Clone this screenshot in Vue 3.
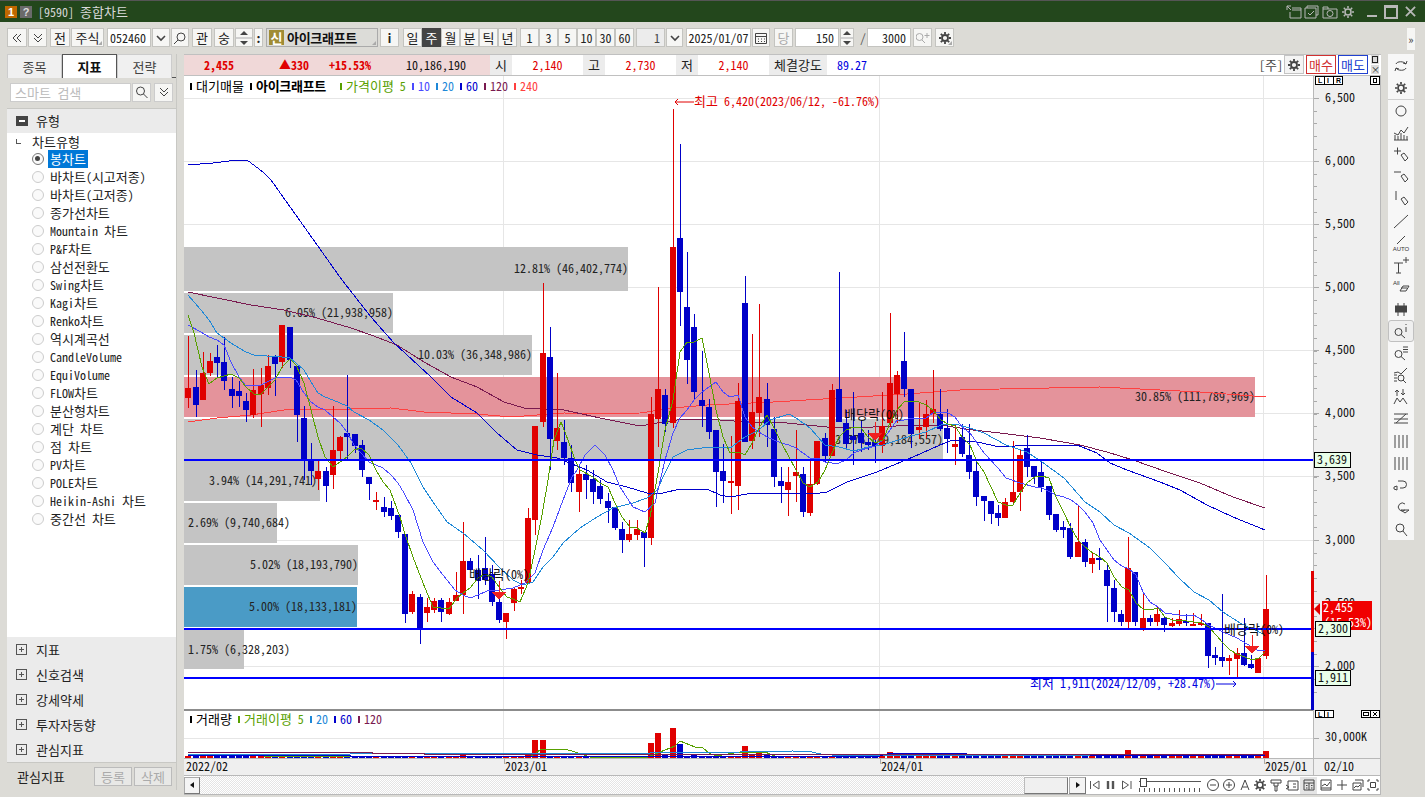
<script setup>
import { h } from 'vue'

const runs = (s) => String(s).split(/([\uAC00-\uD7A3]+)/).filter(Boolean).map(t => ({ t, hg: /[\uAC00-\uD7A3]/.test(t) }))
const Tx = (p) => runs(p.t).map(r => h('span', { class: r.hg ? 'hg' : 'lat' }, r.t))
Tx.props = ['t']
const Ts = (p) => runs(p.t).map(r => h('tspan', { class: r.hg ? 'hg' : 'lat' }, r.t))
Ts.props = ['t']

const toolbar = [
  { w: 20, ml: 0, d: 'M7 3L3 7l4 4M11 3L7 7l4 4' },
  { w: 19, ml: 1, d: 'M3 3l4 4 4-4M3 7l4 4 4-4' },
  { w: 20, ml: 3, t: '전' },
  { w: 33, ml: 1, t: '주식', corner: 1 },
  { w: 44, ml: 3, t: '052460', cls: 'white left' },
  { w: 18, ml: 1, d: 'M3 5l4 4 4-4', stroke: 1.6 },
  { w: 18, ml: 1, d: 'M12 6A4 4 0 1 1 4 6A4 4 0 1 1 12 6M5 9l-4 4' },
  { w: 20, ml: 3, t: '관' },
  { w: 20, ml: 2, t: '숭' },
  { w: 18, ml: 1, spin: 1 },
  { w: 9, ml: 1, t: ':', cls: 'bold' },
  { w: 112, ml: 3, name: 1, corner: 1 },
  { w: 19, ml: 2, t: 'i', cls: 'bold' },
  { w: 19, ml: 4, t: '일' },
  { w: 19, ml: 0, t: '주', cls: 'dark' },
  { w: 19, ml: 0, t: '월' },
  { w: 19, ml: 0, t: '분' },
  { w: 19, ml: 0, t: '틱' },
  { w: 19, ml: 0, t: '년' },
  { w: 19, ml: 3, t: '1' },
  { w: 19, ml: 0, t: '3' },
  { w: 19, ml: 0, t: '5' },
  { w: 19, ml: 0, t: '10' },
  { w: 19, ml: 0, t: '30' },
  { w: 19, ml: 0, t: '60' },
  { w: 29, ml: 2, t: '1', cls: 'gray right' },
  { w: 17, ml: 1, d: 'M3 5l4 4 4-4', stroke: 1.6 },
  { w: 65, ml: 3, t: '2025/01/07', cls: 'white' },
  { w: 18, ml: 1, d: 'M1.5 2.5h11v10h-11zM1.5 5.5h11M4 8h1M7 8h1M10 8h1M4 10.5h1M7 10.5h1M10 10.5h1' },
  { w: 19, ml: 4, t: '당', cls: 'dim' },
  { w: 44, ml: 2, t: '150', cls: 'white right' },
  { w: 14, ml: 1, spin: 1 },
  { w: 6, ml: 6, t: '/', cls: 'plain' },
  { w: 44, ml: 1, t: '3000', cls: 'white right' },
  { w: 19, ml: 2, d: 'M7 6A3.5 3.5 0 1 1 0 6A3.5 3.5 0 1 1 7 6M6 9l3 3M11 2v5M8.5 4.500h5', dim: 1 },
  { w: 19, ml: 3, gear: 1, corner: 1 },
]
const gearPath = 'M7 1v2M7 11v2M1 7h2M11 7h2M2.800 2.800l1.400 1.400M9.800 9.800l1.400 1.400M2.800 11.200l1.400-1.400M9.800 4.200l1.400-1.400M10 7A3 3 0 1 1 4 7A3 3 0 1 1 10 7'
const tree = ['봉차트', '바차트(시고저종)', '바차트(고저종)', '종가선차트', 'Mountain 차트', 'P&F차트', '삼선전환도', 'Swing차트', 'Kagi차트', 'Renko차트', '역시계곡선', 'CandleVolume', 'EquiVolume', 'FLOW차트', '분산형차트', '계단 차트', '점 차트', 'PV차트', 'POLE차트', 'Heikin-Ashi 차트', '중간선 차트']
const accordion = ['지표', '신호검색', '강세약세', '투자자동향', '관심지표']
const legend = [
  { t: '대기매물', c: '#000', w: 60 },
  { t: '아이크래프트', c: '#000', w: 90, b: 1 },
  { t: '가격이평 5', c: '#58a000', w: 72 },
  { t: '10', c: '#4a4aff', w: 24 },
  { t: '20', c: '#1e88d8', w: 24 },
  { t: '60', c: '#0000cc', w: 24 },
  { t: '120', c: '#7a1a50', w: 30 },
  { t: '240', c: '#ff4040', w: 30 },
]
const volLegend = [
  { t: '거래량', c: '#000', w: 48 },
  { t: '거래이평 5', c: '#58a000', w: 72 },
  { t: '20', c: '#1e88d8', w: 24 },
  { t: '60', c: '#0000cc', w: 24 },
  { t: '120', c: '#7a1a50', w: 30 },
]

const raw = `r388 398 336 408,b387 405 370 417,r373 400 352 400,r361 373 353 376,b357 363 345 377,b362 381 337 390,b389 396 377 408,b391 396 381 407,b401 410 393 422,r390 415 369 418,r385 394 368 427,r366 388 355 395,b357 364 355 396,r325 362 325 368,b327 360 327 368,b366 415 366 442,b418 461 406 480,b460 471 443 485,r471 479 460 490,b471 486 467 502,r450 475 406 489,r437 451 436 460,b433 437 375 460,b434 446 434 453,b445 470 440 477,b477 484 477 500,r500 501 492 510,b507 512 497 517,b508 516 501 520,b515 532 515 538,b534 614 534 623,r594 612 591 614,b597 629 594 644,r607 613 598 622,r601 610 598 613,b600 612 598 622,r602 614 598 615,r595 601 572 601,r561 595 522 614,b561 570 558 570,b570 581 555 599,b568 580 537 585,b574 602 565 606,b602 620 581 623,r613 622 613 639,r589 603 587 611,r587 588 580 594,r518 583 508 584,r426 520 426 535,r353 422 283 427,b357 439 327 470,r428 441 373 450,b442 458 420 465,b458 483 445 492,r474 492 470 512,b474 480 465 499,b479 492 470 504,b486 499 480 504,b501 508 493 523,b507 528 507 530,b529 540 522 553,r534 540 520 542,r529 535 520 540,b532 538 532 567,r414 538 397 545,r389 419 287 447,b395 424 389 432,r247 423 109 428,b238 292 144 326,b307 360 252 384,b327 392 314 400,b400 406 351 427,b407 432 399 439,b430 472 430 507,b471 481 444 503,r481 482 436 514,r401 486 383 510,b303 442 276 442,r412 441 334 449,r397 413 304 437,b399 425 383 447,b429 477 417 487,b481 486 467 503,r482 490 467 516,r472 476 430 502,b474 512 467 517,r484 513 460 516,r441 484 441 485,b438 456 433 462,r390 456 384 456,b389 422 272 422,b423 444 410 450,b436 440 392 465,b433 443 420 452,b442 445 430 450,b442 446 422 463,r426 446 392 453,r383 423 313 427,r375 394 371 423,b361 389 332 397,b389 434 389 448,r427 430 402 439,r414 427 400 438,r409 414 370 423,b414 429 389 431,b428 439 409 453,r444 447 425 465,b437 454 424 457,b455 472 424 479,b471 497 459 506,b496 501 496 521,b501 514 501 524,b513 518 505 526,r502 518 498 518,r492 502 441 505,r455 492 450 511,b448 467 435 477,b466 477 466 484,b472 487 460 492,b486 515 486 520,b514 530 514 532,b527 530 521 538,b528 557 523 559,r542 557 506 557,b542 562 539 567,r558 564 553 573,b558 560 548 570,b570 586 563 622,b588 612 580 622,b614 622 610 626,r568 622 537 628,b572 622 572 626,r618 628 594 631,b618 622 615 626,r614 622 607 626,b618 625 616 632,r623 626 618 627,r619 624 610 626,b621 623 614 626,r624 626 613 626,r623 625 614 626,b623 656 623 668,b655 658 647 665,b657 661 594 667,r658 661 655 675,r653 659 648 678,b653 665 618 666,b664 668 655 669,r658 673 658 673,r609 656 575 659`
const candles = raw.split(',').map((s, i) => {
  const [top, bot, hi, lo] = s.slice(1).split(' ').map(Number)
  return { i, x: Math.round(188.3 + i * 7.23), color: s[0] === 'r' ? '#e00000' : '#0000c8', top, h: Math.max(bot - top, 2), hi, wh: lo - hi }
})
const volOver = { 48: 18, 49: 18, 64: 15, 65: 25, 67: 30, 68: 14, 77: 12, 79: 7, 38: 4, 47: 3, 97: 6, 130: 8, 149: 7, 66: 3, 70: 3, 80: 3, 78: 4 }
const volumes = candles.map(c => ({ x: c.x - 3, h: volOver[c.i] || 2, color: volOver[c.i] && c.i === 77 ? '#e00000' : c.color }))

const ma = [
  { c: '#ff4040', p: '188,422 217,418 251,415 284,410 311,409 351,409 391,408 424,412 477,414 511,417 564,413 600,414 640,413 673,408 707,405 773,402 840,398 907,394 960,390 1000,389 1100,387 1200,392 1266,397' },
  { c: '#7a1a50', p: '188,292 217,298 251,305 284,310 317,318 351,328 371,335 397,345 424,362 451,377 477,387 504,402 524,408 564,410 600,418 640,426 657,423 677,420 707,419 747,422 787,423 827,427 873,427 920,425 940,425 973,430 1000,433 1040,438 1080,445 1107,452 1133,460 1167,472 1200,483 1233,497 1265,508' },
  { c: '#0000cc', p: '188,165 213,163 237,160 247,160 263,172 271,180 342,280 371,317 394,343 431,377 451,397 477,413 497,433 517,450 537,455 557,458 587,470 607,482 627,487 647,493 663,493 680,489 707,489 720,495 730,497 753,493 780,493 813,494 827,492 847,482 877,472 913,457 940,445 953,440 977,442 1000,447 1030,445 1077,445 1097,453 1110,463 1127,470 1160,482 1180,490 1207,505 1233,517 1265,530' },
  { c: '#1e88d8', p: '188,295 201,310 209,320 217,333 224,338 231,343 239,348 246,352 254,355 267,356 282,357 290,358 296,363 304,370 311,382 318,393 325,397 333,400 347,406 354,412 369,420 383,430 398,445 411,463 423,487 433,502 447,522 463,533 483,550 499,567 513,580 523,585 533,582 543,567 553,557 563,543 580,528 597,517 613,508 633,503 647,498 657,490 665,473 673,457 687,450 702,448 723,447 730,448 745,437 759,430 770,420 789,414 796,418 810,428 825,445 839,447 854,451 868,447 883,445 904,438 926,432 941,425 955,424 970,428 984,433 1006,445 1027,452 1042,462 1064,478 1085,502 1100,512 1114,525 1129,533 1150,548 1165,563 1179,578 1194,592 1209,600 1223,612 1240,623 1263,634' },
  { c: '#4a4aff', p: '188,325 201,332 209,337 217,340 224,345 231,362 239,377 246,386 254,385 261,385 267,382 275,378 282,377 290,377 296,380 304,393 311,402 318,407 325,410 333,417 340,423 347,432 354,445 361,453 369,462 376,465 383,468 391,475 398,483 404,493 413,510 423,542 433,562 443,575 455,590 463,595 470,598 478,595 487,591 499,590 513,588 525,583 535,573 543,550 553,527 563,500 572,477 577,470 585,455 595,445 605,455 613,470 620,487 633,507 645,512 655,503 665,460 673,433 680,418 687,410 694,400 702,392 716,382 723,392 730,397 738,395 745,417 752,427 759,432 767,437 774,440 781,443 789,445 796,448 803,453 810,458 818,458 825,462 832,463 839,463 846,460 854,453 861,450 868,448 875,446 883,440 890,430 897,420 904,420 912,418 919,418 926,418 933,413 940,412 948,413 955,417 962,427 970,433 977,443 984,453 998,468 1006,478 1020,483 1035,487 1042,488 1056,495 1064,497 1071,500 1078,505 1085,512 1093,523 1100,540 1107,550 1114,560 1122,566 1129,569 1136,575 1143,592 1150,602 1158,607 1165,613 1179,615 1194,615 1202,620 1209,625 1223,632 1237,638 1252,647 1259,651 1265,650' },
  { c: '#58a000', p: '188,315 194,333 202,367 209,384 217,378 224,376 231,374 239,378 246,387 254,394 260,395 267,388 275,380 282,367 290,359 296,365 304,383 311,410 318,437 325,457 333,467 340,462 347,457 354,450 361,448 369,455 376,470 383,482 390,490 400,517 405,534 413,557 423,583 433,607 441,608 449,609 457,598 463,593 470,588 478,578 485,574 492,577 499,587 507,597 513,599 520,602 528,583 535,550 542,515 548,480 554,440 561,422 568,440 575,460 580,470 593,477 600,483 608,487 615,503 622,517 630,527 637,528 645,533 650,517 658,473 665,430 673,400 680,352 687,342 694,342 702,338 709,373 716,410 723,437 730,453 738,452 745,455 752,443 759,428 767,415 774,428 781,442 789,457 796,470 803,483 810,487 818,482 825,470 832,453 839,437 846,430 854,427 861,428 868,437 875,443 883,440 890,423 897,410 904,402 912,401 919,402 926,405 933,410 941,420 948,424 955,426 962,437 970,445 977,462 984,472 991,487 998,502 1006,505 1013,505 1020,493 1027,483 1035,477 1042,476 1049,478 1056,497 1064,513 1071,528 1078,540 1085,547 1093,553 1100,557 1107,563 1114,577 1122,587 1129,590 1136,603 1143,609 1150,610 1158,608 1165,617 1172,620 1179,620 1187,621 1194,622 1202,623 1209,627 1216,635 1223,643 1230,650 1237,654 1245,657 1252,660 1259,658 1265,652' },
]
const volMa = [
  { c: '#58a000', p: '188,755 260,756 530,757 540,750 553,749 565,749 575,752 590,757 648,757 660,752 675,746 680,741 695,747 702,747 709,753 716,756 740,752 765,752 775,756' },
  { c: '#1e88d8', p: '188,754 350,754 650,753 740,752 793,751 812,752 825,755 1265,756' },
  { c: '#0000cc', p: '188,755 350,755 350,756 880,756 890,753 966,753 966,754 1090,754 1090,755 1265,755' },
  { c: '#7a1a50', p: '188,752 372,752 372,753 424,753 424,754 1265,754' },
]
const bars = [
  { y: 247, h: 44, w: 444, t: '12.81% (46,402,774)' },
  { y: 293, h: 40, w: 209, t: '6.05% (21,938,958)' },
  { y: 335, h: 40, w: 348, t: '10.03% (36,348,986)' },
  { y: 419, h: 41, w: 759, t: '13.57% (49,184,557)' },
  { y: 377, h: 40, w: 1071, t: '30.85% (111,789,969)', c: '#e4939b' },
  { y: 461, h: 40, w: 136, t: '3.94% (14,291,741)', dx: -3 },
  { y: 503, h: 40, w: 93, t: '2.69% (9,740,684)', left: 1 },
  { y: 545, h: 40, w: 174, t: '5.02% (18,193,790)' },
  { y: 587, h: 40, w: 173, t: '5.00% (18,133,181)', c: '#4a9bc6' },
  { y: 630, h: 39, w: 60, t: '1.75% (6,328,203)', left: 1 },
]
const prices = [['6,500', 98], ['6,000', 161], ['5,500', 224], ['5,000', 287], ['4,500', 350], ['4,000', 413], ['3,500', 476], ['3,000', 540], ['2,500', 603], ['2,000', 666]]
const minor = Array.from({ length: 48 }, (_, i) => 98 + i * 12.63)
const hGuides = [[460, '3,639', 1314, 36], [629, '2,300', 1315, 35], [678, '1,911', 1315, 35]]
const dates = [['2022/02', 186], ['2023/01', 505], ['2024/01', 881], ['2025/01', 1265]]

const tools = [
  { d: 'M5 8c1-3 8-3 10 0M15 8l1-3M15 8l-3-1M15 12c-1 3-8 3-10 0M5 12l-1 3M5 12l3 1', tall: 1 },
  { d: 'M10 4v2M10 14v2M4 10h2M14 10h2M5.800 5.800l1.400 1.400M12.800 12.800l1.400 1.400M5.800 14.200l1.400-1.400M12.800 7.200l1.400-1.400M13 10A3 3 0 1 1 7 10A3 3 0 1 1 13 10', sw: 1.7, sep: 1 },
  { d: 'M15 10A5 5 0 1 1 5 10A5 5 0 1 1 15 10' },
  { d: 'M3 17h14M4 17v-5M7 17v-4M10 17v-7M13 17v-5M16 17v-4M3 10l4 2 3-5 3 3 4-6' },
  { d: 'M3 6h7M6.500 2.500v7M10 10l3-2 4 5-3 3z' },
  { d: 'M3 5h7M10 9l3-2 4 5-3 3z' },
  { d: 'M5 2v9M10 10l3-2 4 5-3 3z' },
  { d: 'M3 17L17 4' },
  { d: 'M6 11L14 3', label: 'AUTO' },
  { d: 'M3 8h9M7.500 8v10M5 18h5M15 2v6M12 5h6' },
  { d: 'M9 14h6l3-5h-6zM10 11h6', label2: 'All' },
  { d: 'M7 4v13M13 4v13', fillRects: 1 },
  { d: 'M11 11A3.500 3.500 0 1 1 4 11A3.500 3.500 0 1 1 11 11M10 13.500l4 3.500M15 3v1M15 6v5', on: 1 },
  { d: 'M11 11A3.500 3.500 0 1 1 4 11A3.500 3.500 0 1 1 11 11M10 13.500l4 3.500M12 4h5M12 6.500h5M12 9h5' },
  { d: 'M13 13A3 3 0 1 1 7 13A3 3 0 1 1 13 13M12 15l3 3M3 10h3M3 13h3M3 16h3M3 8l4-1 3 2 6-6' },
  { d: 'M3 17l3-6 3 4 3-4 4 6M6 3v6M4 5l2-2 2 2M12 8V2M10 6l2 2 2-2' },
  { d: 'M3 5h14M15 5L5 14M3 10h14M3 14h14' },
  { d: 'M4 4v13M8 4v13M12 4v13M16 4v13' },
  { d: 'M4 4v13M8 4v13M12 4v13M16 4v13' },
  { d: 'M7 6h5a3.500 3.500 0 0 1 0 7H9M3 12l3-1 0 4-3-1z' },
  { d: 'M14 13A4 4 0 1 1 14 7M10 13h8l-4 3z' },
  { d: 'M13 9A4 4 0 1 1 5 9A4 4 0 1 1 13 9M12 12l4 5' },
]
const bottomIcons = [
  { w: 16, d: 'M2.500 3v8M11 3L5 7l6 4z', ml: 1 },
  { w: 16, d: 'M4 3v8M9 3v8', sw: 2.400 },
  { w: 15, d: 'M11.500 3v8M3 3l6 4-6 4z' },
]
const bottomIcons2 = [
  { w: 17, d: 'M12.500 7A5.500 5.500 0 1 1 1.500 7A5.500 5.500 0 1 1 12.500 7M4 7h6' },
  { w: 16, d: 'M12.500 7A5.500 5.500 0 1 1 1.500 7A5.500 5.500 0 1 1 12.500 7M4 7h6M7 4v6' },
  { w: 15, d: 'M3 12L7 2l4 10M4.500 9h5' },
  { w: 16, d: gearPath, sw: 1.700 },
  { w: 16, d: 'M2 2h10v3H2zM5 5v3h4V5M6 8v5h2V8' },
  { w: 16, d: 'M3 3h10v9H3zM1 7l3 2-3 2M8 6h3M8 9h3' },
  { w: 17, d: 'M2 2h10v10H2zM2 5h10M7 5v7M4 7.500h1.500M9 7.500h1.500M4 10h1.500M9 10h1.500', on: 1 },
  { w: 17, d: 'M2 2h10v10H2zM3 8l3-2 2 2 3-4M2 10h10' },
  { w: 16, d: 'M7 2v10M2 7h10' },
  { w: 15, d: 'M4 2h8v7M2 5h8v7H2zM3 10l2-2 2 1 2-2' },
  { w: 16, d: 'M2 4V2h2M10 2h2v2M12 10v2h-2M4 12H2v-2M4.500 4.500h5v5h-5z' },
]
</script>

<template>
  <div class="window">
    <header class="titlebar">
      <span class="badge orange">1</span>
      <span class="badge grey">?</span>
      <span class="title"><Tx t="[9590] 종합차트" /></span>
      <div class="winicons">
        <svg class="wi" viewBox="0 0 16 14"><path d="M1 1h4M1 1v4M1 1l4 4M6 3h9v10H4V7M6 5h9" /></svg>
        <svg class="wi" viewBox="0 0 16 14"><path d="M3 3V1h11v9h-2M1 3h11v10H1zM4 8l2 2 4-4" /></svg>
        <svg class="wi" viewBox="0 0 16 14"><path d="M1 4h14v9H1zM1 4V2h5v2M11 8.500a3 3 0 1 1-6 0a3 3 0 1 1 6 0" /></svg>
        <svg class="wi" viewBox="0 0 14 14"><path :d="gearPath" stroke-width="1.500" /></svg>
        <span class="win-min"></span>
        <span class="win-max"></span>
        <svg class="win-x" viewBox="0 0 12 12"><path d="M1 1l10 10M11 1L1 11" /></svg>
      </div>
    </header>

    <div class="toolbar">
      <div
        v-for="(b, i) in toolbar"
        :key="i"
        class="tb"
        :class="[b.cls, { corner: b.corner, namebtn: b.name }]"
        :style="{ width: b.w + 'px', marginLeft: b.ml + 'px' }"
      >
        <Tx v-if="b.t" :t="b.t" />
        <svg v-if="b.d" class="ic14" :class="{ dimicon: b.dim }" viewBox="0 0 14 14"><path :d="b.d" :stroke-width="b.stroke || 1" /></svg>
        <svg v-if="b.gear" class="ic14" viewBox="0 0 14 14"><path :d="gearPath" stroke-width="1.800" /></svg>
        <div v-if="b.spin" class="spin"><i class="up"></i><b></b><i class="down"></i></div>
        <template v-if="b.name"><span class="new">신</span><span class="stockname">아이크래프트</span></template>
      </div>
      <div class="more">»</div>
    </div>

    <div class="main">
      <aside class="side">
        <div class="tabs">
          <div class="tab">종목</div>
          <div class="tab active">지표</div>
          <div class="tab">전략</div>
        </div>
        <div class="searchrow">
          <div class="searchbox">스마트 검색</div>
          <div class="sbtn first"><svg class="ic14" viewBox="0 0 14 14"><path d="M9.500 6A4 4 0 1 1 1.500 6A4 4 0 1 1 9.500 6M8.500 9l4 4" /></svg></div>
          <div class="sbtn"><svg class="ic14" viewBox="0 0 14 14"><path d="M3 3l4 4 4-4M3 7l4 4 4-4" /></svg></div>
        </div>
        <div class="sect"><span class="folder"><i></i></span>유형</div>
        <div class="tree">
          <div class="treehead"><span class="elbow"></span>차트유형</div>
          <div v-for="(t, i) in tree" :key="t" class="treerow">
            <span class="radio" :class="{ on: i === 0 }"></span>
            <span class="tlabel" :class="{ sel: i === 0 }"><Tx :t="t" /></span>
          </div>
        </div>
        <div class="accordion">
          <div v-for="a in accordion" :key="a" class="acc">
            <span class="plus"></span>{{ a }}
          </div>
        </div>
        <div class="sidefoot">
          <span class="footlabel">관심지표</span>
          <span class="footbtn">등록</span>
          <span class="footbtn">삭제</span>
        </div>
      </aside>

      <section class="chart">
        <div class="quote">
          <div class="q-pink">
            <span class="q-price">2,455</span>
            <span class="q-up">▲330</span>
            <span class="q-rate">+15.53%</span>
            <span class="q-vol">10,186,190</span>
          </div>
          <span class="q-label w22">시</span><span class="q-val w71">2,140</span>
          <span class="q-label w22">고</span><span class="q-val w71">2,730</span>
          <span class="q-label w22">저</span><span class="q-val w71">2,140</span>
          <span class="q-label w58">체결강도</span><span class="q-blue">89.27</span>
          <span class="q-unit"><Tx t="[주]" /></span>
          <span class="q-gear"><svg class="ic14" viewBox="0 0 14 14"><path :d="gearPath" stroke-width="1.800" /></svg></span>
          <span class="q-buy">매수</span>
          <span class="q-sell">매도</span>
          <div class="q-mini">
            <span><i class="sq"></i></span>
            <span class="x">×</span>
          </div>
        </div>

        <div class="canvas">
          <svg class="plot" width="1197" height="700" viewBox="184 76 1197 700">
            <rect x="184" y="76" width="1129" height="683" fill="#fff" />
            <g shape-rendering="crispEdges">
              <rect v-for="p in prices" :key="p[0]" x="184" :y="p[1]" width="1129" height="1" fill="#e6e6e6" />
              <rect x="184" y="738" width="1129" height="1" fill="#e6e6e6" />
              <rect x="503" y="76" width="1" height="682" fill="#e6e6e6" />
              <rect x="879" y="76" width="1" height="682" fill="#e6e6e6" />
              <rect x="1263" y="76" width="1" height="682" fill="#e6e6e6" />
              <rect v-for="b in bars" :key="b.t" x="184" :y="b.y" :width="b.w" :height="b.h" :fill="b.c || '#c4c4c4'" />
            </g>
            <text
              v-for="b in bars"
              :key="b.t + 't'"
              class="t12"
              :x="b.left ? 188 : 184 + b.w + (b.dx || 0)"
              :y="b.y + b.h / 2 + 4"
              :text-anchor="b.left ? 'start' : 'end'"
              fill="#222"
            >{{ b.t }}</text>

            <g shape-rendering="crispEdges">
              <polyline v-for="m in ma.slice(0, 2)" :key="m.c" :points="m.p" fill="none" :stroke="m.c" stroke-width="1" />
              <g v-for="c in candles" :key="c.i">
                <rect :x="c.x" :y="c.hi" width="1" :height="c.wh" :fill="c.color" />
                <rect :x="c.x - 3" :y="c.top" width="6" :height="c.h" :fill="c.color" />
              </g>
              <polyline v-for="m in ma.slice(2)" :key="m.c" :points="m.p" fill="none" :stroke="m.c" stroke-width="1" />
              <rect v-for="g in hGuides" :key="g[0]" x="184" :y="g[0] - 1" width="1129" height="2" fill="#0000ff" />
            </g>

            <g fill="#f02020" shape-rendering="crispEdges">
              <rect x="499" y="581" width="1" height="12" /><polygon points="492,592 506,592 499,600" />
              <rect x="875" y="422" width="1" height="12" /><polygon points="868,433 882,433 875,441" />
              <rect x="1252" y="635" width="1" height="12" /><polygon points="1245,646 1259,646 1252,654" />
            </g>
            <text class="t12" x="844" y="419" fill="#111"><Ts t="배당락(0%)" /></text>
            <text class="t12" x="469" y="579" fill="#111"><Ts t="배당락(0%)" /></text>
            <text class="t12" x="1224" y="634" fill="#111"><Ts t="배당락(0%)" /></text>
            <path d="M694 102H675M678 99l-3 3 3 3" fill="none" stroke="#e00000" />
            <text class="t12" x="694" y="106" fill="#e00000"><Ts t="최고 6,420(2023/06/12, -61.76%)" /></text>
            <text class="t12" x="1030" y="688" fill="#0000e0"><Ts t="최저 1,911(2024/12/09, +28.47%)" /></text>
            <path d="M1216 684H1236M1233 681l3 3-3 3" fill="none" stroke="#0000e0" />

            <rect x="184" y="709" width="1129" height="2" fill="#8c8c8c" />
            <g shape-rendering="crispEdges">
              <rect v-for="(v, i) in volumes" :key="i" :x="v.x" :y="758 - v.h" width="6" :height="v.h" :fill="v.color" />
              <polyline v-for="m in volMa" :key="m.c" :points="m.p" fill="none" :stroke="m.c" stroke-width="1" />
            </g>

            <rect x="1313" y="76" width="67" height="683" fill="#efefef" />
            <rect x="1313" y="76" width="1" height="683" fill="#b8b8b8" />
            <rect x="1380" y="76" width="1" height="700" fill="#b8b8b8" />
            <g shape-rendering="crispEdges">
              <rect v-for="m in minor" :key="m" x="1314" :y="m" width="3" height="1" fill="#aaa" />
              <rect v-for="p in prices" :key="p[0] + 'k'" x="1314" :y="p[1]" width="5" height="1" fill="#aaa" />
              <rect x="1314" y="738" width="5" height="1" fill="#aaa" />
            </g>
            <text v-for="p in prices" :key="p[0] + 'l'" class="t12" x="1325" :y="p[1] + 4" fill="#111">{{ p[0] }}</text>
            <text class="t12" x="1325" y="741" fill="#111">30,000K</text>

            <g shape-rendering="crispEdges">
              <rect x="1311" y="571" width="3" height="81" fill="#e00000" />
              <rect x="1311" y="652" width="3" height="58" fill="#0000c8" />
            </g>
            <rect x="1322" y="601" width="50" height="29" fill="#f00000" />
            <polygon points="1320,603 1320,615 1314,609" fill="#e00000" />
            <text class="t12" x="1323" y="612" fill="#fff">2,455</text>
            <text class="t12" x="1324" y="627" fill="#fff">(15.53%)</text>
            <g v-for="g in hGuides" :key="g[1]">
              <rect :x="g[2] + 0.5" :y="g[0] - 7.5" :width="g[3]" height="15" fill="#e9ffe9" stroke="#000" />
              <text class="t12" :x="g[2] + 3" :y="g[0] + 4" fill="#111">{{ g[1] }}</text>
            </g>

            <g class="lir">
              <rect x="1315.500" y="76.500" width="9" height="8" /><rect x="1324.500" y="76.500" width="9" height="8" /><rect x="1333.500" y="76.500" width="9" height="8" />
              <rect x="1370.500" y="76.500" width="9" height="8" /><rect x="1373.500" y="78.500" width="3" height="4" />
              <rect x="1315.500" y="710.500" width="9" height="7" /><rect x="1324.500" y="710.500" width="9" height="7" />
              <rect x="1361.500" y="710.500" width="9" height="7" /><rect x="1370.500" y="710.500" width="9" height="7" />
              <rect x="1363.500" y="712.500" width="5" height="3" />
              <path d="M1373 712l4 4M1377 712l-4 4" />
            </g>
            <text class="t7" x="1318" y="83">L</text><text class="t7" x="1327" y="83">I</text><text class="t7" x="1336" y="83">R</text>
            <text class="t7" x="1318" y="717">L</text><text class="t7" x="1327" y="717">I</text>

            <rect x="184" y="758" width="1196" height="18" fill="#efefef" />
            <rect x="184" y="758" width="1197" height="1" fill="#b8b8b8" />
            <rect x="1313" y="758" width="1" height="18" fill="#b8b8b8" />
            <rect x="184" y="775" width="1197" height="1" fill="#b8b8b8" />
            <rect x="504" y="759" width="1" height="5" fill="#aaa" /><rect x="880" y="759" width="1" height="5" fill="#aaa" /><rect x="1264" y="759" width="1" height="5" fill="#aaa" />
            <text v-for="d in dates" :key="d[0]" class="t12" :x="d[1]" y="771" fill="#111">{{ d[0] }}</text>
            <text class="t12" x="1324" y="771" fill="#111">02/10</text>
          </svg>

          <div class="legend price-legend">
            <span v-for="l in legend" :key="l.t" class="lg" :class="{ lgb: l.b }" :style="{ color: l.c, width: l.w + 'px' }"><i :style="{ background: l.c }"></i><span class="lgt"><Tx :t="l.t" /></span></span>
          </div>
          <div class="legend vol-legend">
            <span v-for="l in volLegend" :key="l.t" class="lg" :style="{ color: l.c, width: l.w + 'px' }"><i :style="{ background: l.c }"></i><span class="lgt"><Tx :t="l.t" /></span></span>
          </div>
        </div>

        <div class="scrollrow">
          <div class="sb-btn"><i class="tri-l"></i></div>
          <div class="sb-track"></div>
          <div class="sb-thumb"></div>
          <div class="sb-btn right"><i class="tri-r"></i></div>
          <svg v-for="(c, i) in bottomIcons" :key="'a' + i" class="bi" :style="{ width: c.w + 'px', marginLeft: (c.ml || 0) + 'px' }" viewBox="0 0 14 14"><path :d="c.d" :stroke-width="c.sw || 1" /></svg>
          <div class="slider"><i class="knob"></i><b></b><u></u></div>
          <div v-for="(c, i) in bottomIcons2" :key="'b' + i" class="bwrap" :class="{ bon: c.on }" :style="{ width: c.w + 'px' }">
            <svg class="ic14" viewBox="0 0 14 14"><path :d="c.d" :stroke-width="c.sw || 1" /></svg>
          </div>
        </div>
      </section>

      <nav class="tools">
        <div v-for="(t, i) in tools" :key="i" class="tool" :class="{ sep: t.sep, on: t.on, tall: t.tall }">
          <svg class="ic20" viewBox="0 0 20 20">
            <path :d="t.d" :stroke-width="t.sw || 1" />
            <g v-if="t.fillRects"><rect x="4.500" y="7" width="5" height="6" class="fillr" /><rect x="10.500" y="7" width="5" height="6" class="fillr" /></g>
            <text v-if="t.label" x="10" y="18" class="tiny" text-anchor="middle">{{ t.label }}</text>
            <text v-if="t.label2" x="2" y="8" class="tiny">{{ t.label2 }}</text>
          </svg>
        </div>
      </nav>
    </div>
  </div>
</template>

<style>
html, body { margin: 0; background: #dcdbd6; overflow: hidden; }
.hg { font-size: 13px; }
.lat { font-size: 12px; white-space: pre; }
</style>

<style scoped>
.window {
  width: 1425px; height: 797px; overflow: hidden; display: flex; flex-direction: column;
  background: #dcdbd6; color: #222; position: relative;
  font: 12px/14px "Noto Sans Mono CJK KR", "Noto Sans CJK KR", "Liberation Sans", sans-serif;
}
.titlebar {
  height: 21px; flex: none; display: flex; align-items: center; background: #23471c;
  border-top: 1px solid #555; padding-left: 5px;
}
.badge { width: 12px; height: 12px; font: bold 11px/12px "Liberation Sans", sans-serif; text-align: center; color: #fff; }
.orange { background: #c06800; }
.grey { background: #6a6a6a; margin-left: 3px; color: #ddd; }
.title { margin-left: 6px; color: #d8d8d8; white-space: nowrap; }
.winicons { margin-left: auto; display: flex; align-items: center; margin-right: 9px; }
.wi { width: 16px; height: 14px; margin-right: 2px; fill: none; stroke: #b8b8b8; }
.win-min { width: 10px; height: 2px; background: #b8b8b8; margin: 8px 7px 0 9px; }
.win-max { width: 10px; height: 9px; border: 2px solid #b8b8b8; border-top-width: 3px; }
.win-x { width: 11px; height: 11px; margin-left: 7px; fill: none; stroke: #b8b8b8; stroke-width: 2; }

.toolbar { height: 32px; flex: none; box-sizing: border-box; padding: 6px 0 0 7px; display: flex; align-items: flex-start; position: relative; }
.tb {
  height: 19px; flex: none; box-sizing: border-box; border: 1px solid #c4c4c0; background: #f6f6f4;
  display: flex; align-items: center; justify-content: center; color: #222; position: relative; white-space: nowrap;
}
.tb.white { background: #fff; }
.tb.left { justify-content: flex-start; padding-left: 2px; }
.tb.right { justify-content: flex-end; padding-right: 4px; }
.tb.gray { background: #ececec; color: #444; }
.tb.bold { font-weight: 700; }
.tb.dark { background: #444; color: #fff; border-color: #444; }
.tb.dim { color: #aaa; }
.tb.plain { background: none; border: none; color: #555; }
.tb.corner::after { content: ""; position: absolute; right: 1px; bottom: 1px; border-left: 4px solid transparent; border-bottom: 4px solid #aaa; }
.tb.namebtn { background: #dcdcd8; justify-content: flex-start; border-color: #aaa; padding-left: 2px; }
.new { width: 15px; height: 15px; background: #a08c34; color: #fff; font-weight: 700; text-align: center; line-height: 15px; font-size: 13px; }
.stockname { margin-left: 3px; font-weight: 700; font-size: 13px; letter-spacing: -.3px; color: #111; }
.ic14 { width: 14px; height: 14px; fill: none; stroke: #444; }
.dimicon { stroke: #aaa; }
.spin { display: flex; flex-direction: column; align-items: center; width: 100%; }
.spin i { width: 0; height: 0; border-left: 4px solid transparent; border-right: 4px solid transparent; }
.spin .up { border-bottom: 4px solid #444; }
.spin .down { border-top: 4px solid #444; }
.spin b { height: 2px; width: 100%; background: #d0d0d0; margin: 2px 0; }
.more { position: absolute; left: 1407px; top: 6px; width: 8px; height: 22px; background: #f6f6f4; color: #333; text-align: center; line-height: 22px; font-size: 11px; }

.main { flex: 1; display: flex; min-height: 0; align-items: flex-start; }
.side { width: 170px; height: 736px; margin-left: 7px; flex: none; display: flex; flex-direction: column; box-sizing: border-box; border-right: 1px solid #c8c8c4; }
.tabs { display: flex; height: 24px; flex: none; border-bottom: 1px solid #555; box-sizing: border-box; }
.tab { width: 55px; height: 24px; box-sizing: border-box; background: #f0f0f0; border: 1px solid #ccc; border-bottom: none; text-align: center; line-height: 24px; color: #444; font-size: 13px; }
.tab.active { background: #fff; border: 1px solid #555; border-bottom: none; font-weight: 700; color: #111; height: 24px; }
.searchrow { height: 30px; flex: none; display: flex; align-items: center; padding: 0 0 2px 3px; box-sizing: border-box; }
.searchbox { width: 121px; height: 19px; box-sizing: border-box; background: #fff; border: 1px solid #ccc; color: #bbb; padding-left: 4px; line-height: 17px; font-size: 13px; white-space: nowrap; }
.sbtn { width: 19px; height: 19px; box-sizing: border-box; background: #f6f6f4; border: 1px solid #ccc; margin-left: 2px; display: flex; align-items: center; justify-content: center; }
.sbtn.first { margin-left: 1px; margin-right: 1px; }
.sect { height: 25px; flex: none; background: #ebebeb; border-top: 1px solid #c8c8c4; box-sizing: border-box; display: flex; align-items: center; padding-left: 9px; font-size: 13px; }
.folder { width: 12px; height: 10px; background: #444; margin-right: 8px; display: flex; align-items: center; justify-content: center; }
.folder i { width: 6px; height: 2px; background: #fff; }
.tree { height: 504px; flex: none; background: #fff; }
.treehead { height: 17px; line-height: 17px; padding-left: 25px; position: relative; font-size: 13px; }
.elbow { position: absolute; left: 9px; top: 6px; width: 4px; height: 4px; border-left: 1px solid #555; border-bottom: 1px solid #555; }
.treerow { height: 18px; display: flex; align-items: center; padding-left: 25px; }
.radio { width: 12px; height: 12px; box-sizing: border-box; border: 1px solid #ccc; border-radius: 50%; flex: none; margin-right: 5px; background: #fafafa; }
.radio.on { border: 1.5px solid #777; position: relative; }
.radio.on::after { content: ""; position: absolute; left: 2px; top: 2px; width: 5px; height: 5px; border-radius: 50%; background: #444; }
.tlabel { padding: 2px; line-height: 14px; white-space: nowrap; margin-left: -1px; }
.tlabel.sel { background: #0078d7; color: #fff; }
.accordion { background: #ebebeb; flex: none; }
.acc { height: 25px; display: flex; align-items: center; padding-left: 9px; font-size: 13px; }
.plus { width: 11px; height: 11px; border: 1px solid #555; box-sizing: border-box; margin-right: 9px; position: relative; }
.plus::before { content: ""; position: absolute; left: 2px; top: 4px; width: 5px; height: 1px; background: #555; }
.plus::after { content: ""; position: absolute; left: 4px; top: 2px; width: 1px; height: 5px; background: #555; }
.sidefoot { flex: 1; display: flex; align-items: center; padding-left: 10px; border-top: 1px solid #c8c8c4; font-size: 13px; }
.footlabel { width: 77px; flex: none; }
.footbtn { width: 38px; height: 19px; box-sizing: border-box; border: 1px solid #bbb; background: #e8e8e6; color: #aaa; text-align: center; line-height: 17px; margin-right: 2px; }

.chart { width: 1197px; margin-left: 7px; flex: none; display: flex; flex-direction: column; }
.quote { height: 22px; flex: none; display: flex; align-items: center; background: #fff; box-sizing: border-box; border-top: 1px solid #c0c0c0; border-bottom: 1px solid #c0c0c0; position: relative; }
.q-pink { width: 306px; height: 100%; background: #f0d8d8; position: relative; flex: none; }
.q-pink span { position: absolute; top: 3px; white-space: nowrap; }
.q-price { left: 20px; color: #e00000; font-weight: 700; }
.q-up { left: 95px; color: #e00000; font-weight: 700; }
.q-rate { left: 145px; color: #e00000; font-weight: 700; }
.q-vol { left: 222px; color: #111; }
.q-label { height: 100%; background: #ececec; text-align: center; line-height: 20px; color: #222; flex: none; font-size: 13px; }
.w22 { width: 22px; }
.w58 { width: 58px; }
.q-val { color: #e00000; text-align: center; flex: none; }
.w71 { width: 71px; }
.q-blue { color: #0000e0; margin-left: 10px; }
.q-unit { position: absolute; left: 1075px; top: 3px; color: #444; white-space: nowrap; }
.q-gear { position: absolute; left: 1100px; top: 0; width: 20px; height: 19px; box-sizing: border-box; border: 1px solid #c4c4c4; background: #f4f4f4; display: flex; align-items: center; justify-content: center; }
.q-buy, .q-sell { position: absolute; top: 0; width: 30px; height: 19px; box-sizing: border-box; background: #fff; text-align: center; line-height: 17px; font-size: 13px; }
.q-buy { left: 1122px; border: 1px solid #d03030; color: #d03030; }
.q-sell { left: 1154px; border: 1px solid #2040d0; color: #2040d0; }
.q-mini { position: absolute; left: 1187px; top: 0; width: 8px; }
.q-mini span { display: block; width: 8px; height: 9px; background: #dcdcdc; margin-bottom: 1px; position: relative; line-height: 9px; text-align: center; font-size: 9px; }
.sq { position: absolute; left: 1px; top: 1px; width: 4px; height: 5px; border: 1px solid #222; }

.canvas { position: relative; height: 700px; flex: none; }
.plot { display: block; }
.t12 { font-size: 12px; }
.t7 { font: bold 7px "Liberation Sans", sans-serif; fill: #000; }
.lir rect, .lir path { fill: #fff; stroke: #000; }
.legend { position: absolute; left: 6px; display: flex; white-space: nowrap; line-height: 14px; }
.price-legend { top: 3px; }
.vol-legend { top: 636px; }
.lg { display: flex; align-items: center; flex: none; }
.lg i { width: 2px; height: 7px; margin-right: 4px; flex: none; }
.lgt { white-space: nowrap; }
.lgb { font-weight: 700; letter-spacing: -.3px; }

.scrollrow { height: 19px; flex: none; display: flex; align-items: center; background: #fff; border-right: 1px solid #b8b8b8; box-sizing: border-box; border-bottom: 1px solid #b8b8b8; }
.sb-btn { width: 16px; height: 17px; box-sizing: border-box; background: #f4f4f4; border: 1px solid #aaa; border-right-color: #777; border-bottom-color: #777; display: flex; align-items: center; justify-content: center; flex: none; }
.sb-btn.right { width: 17px; margin-left: 1px; }
.tri-l, .tri-r { width: 0; height: 0; border-top: 3px solid transparent; border-bottom: 3px solid transparent; }
.tri-l { border-right: 4px solid #111; }
.tri-r { border-left: 4px solid #111; }
.sb-track { width: 824px; height: 18px; flex: none; background: repeating-conic-gradient(#e4e4e4 0 25%, #fff 0 50%) 0 0 / 2px 2px; }
.sb-thumb { width: 44px; height: 17px; box-sizing: border-box; flex: none; background: #f0f0f0; border: 1px solid #bbb; border-right-color: #777; border-bottom-color: #777; }
.bi { height: 14px; fill: none; stroke: #555; flex: none; }
.slider { width: 62px; height: 16px; margin: 0 3px 0 5px; flex: none; position: relative; }
.slider b { position: absolute; left: 0; right: 0; top: 4px; height: 1px; background: #555; }
.slider u { position: absolute; left: 0; right: 0; bottom: 1px; height: 4px; background: repeating-linear-gradient(90deg, #555 0 1px, transparent 1px 5px); }
.knob { position: absolute; left: 1px; top: 1px; width: 5px; height: 7px; background: #fff; border: 1px solid #444; z-index: 1; }
.bwrap { height: 17px; flex: none; display: flex; align-items: center; justify-content: center; }
.bon { background: #e4e4e4; }

.tools { width: 26px; margin-left: 7px; flex: none; background: #f7f7f7; }
.tool { height: 22px; display: flex; align-items: center; justify-content: center; box-sizing: border-box; }
.tool.tall { height: 23px; }
.tool.sep { border-bottom: 1px solid #d0d0d0; height: 23px; }
.tool.on { border: 1px solid #c0c0c0; border-radius: 3px; background: #efefef; }
.ic20 { width: 20px; height: 20px; fill: none; stroke: #444; }
.ic20 text { fill: #333; stroke: none; }
.tiny { font: 6px "Liberation Sans", sans-serif; }
.fillr { fill: #444; stroke: #444; }
</style>
